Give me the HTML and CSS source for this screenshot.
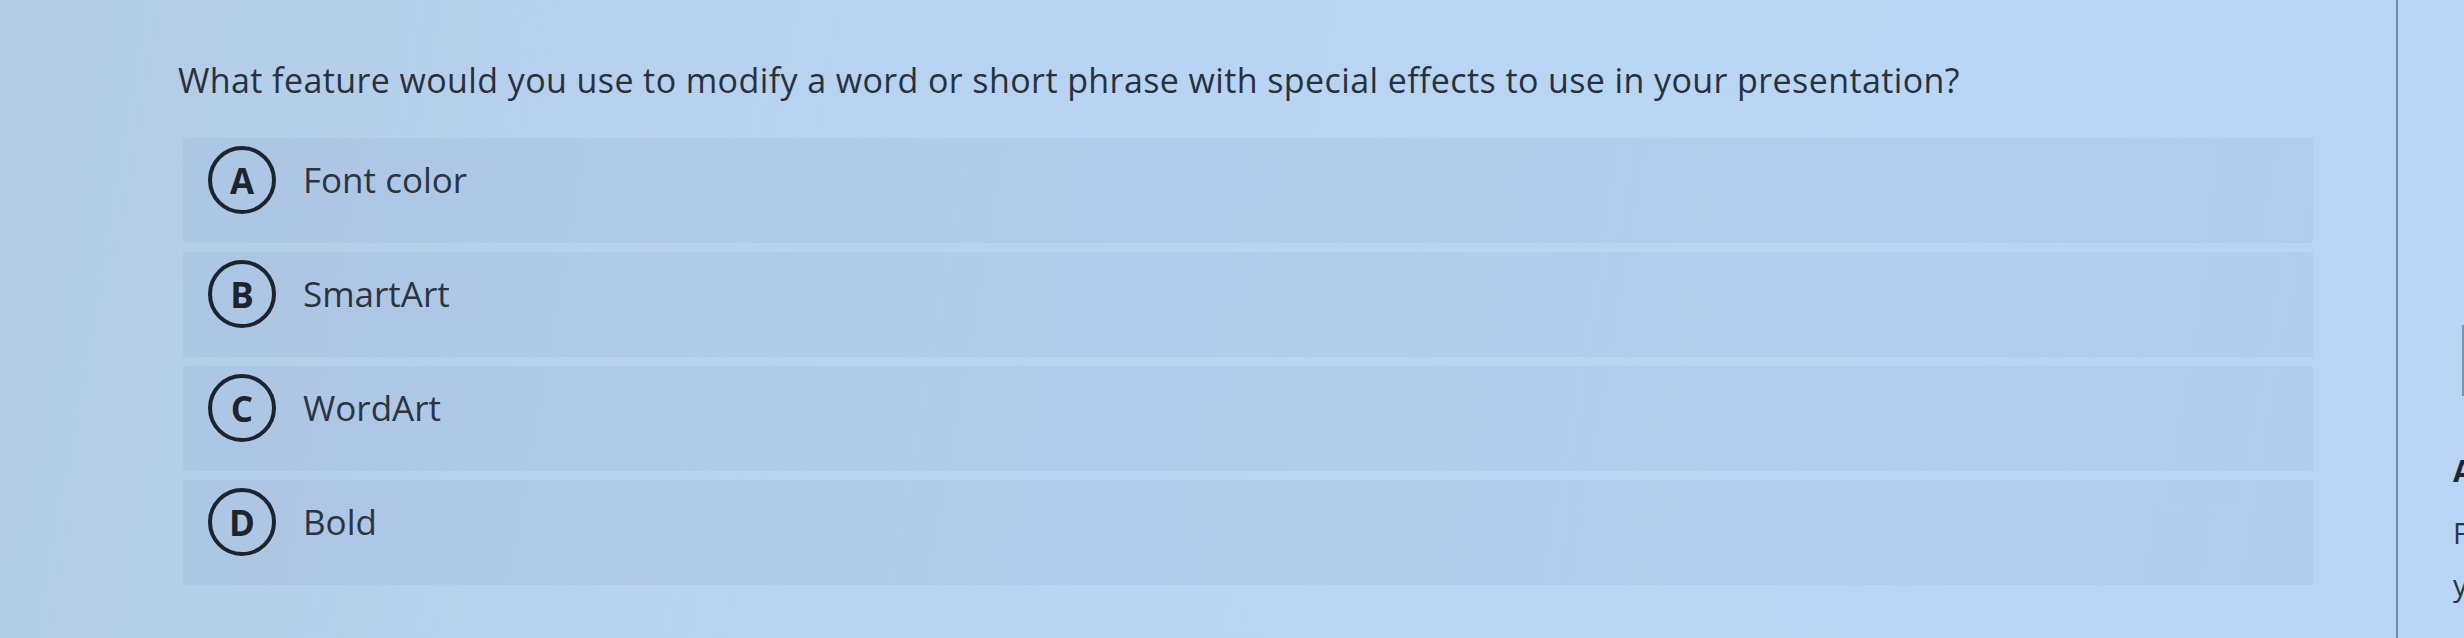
FILE: index.html
```html
<!DOCTYPE html>
<html lang="en">
<head>
<meta charset="utf-8">
<title>Question</title>
<link rel="stylesheet" href="styles.css">
</head>
<body>
<div class="page">
  <main class="main">
    <p class="question">What feature would you use to modify a word or short phrase with special effects to use in your presentation?</p>
    <div class="options">
      <div class="option"><span class="letter">A</span><span class="label">Font color</span></div>
      <div class="option"><span class="letter">B</span><span class="label">SmartArt</span></div>
      <div class="option"><span class="letter">C</span><span class="label">WordArt</span></div>
      <div class="option"><span class="letter">D</span><span class="label">Bold</span></div>
    </div>
  </main>
  <aside class="side">
    <div class="side-edge"></div>
    <div class="side-text">
      <div class="side-title">Answer</div>
      <div class="side-line">For</div>
      <div class="side-line">you</div>
    </div>
  </aside>
</div>
</body>
</html>
```

FILE: styles.css
```css
html, body {
  margin: 0;
  padding: 0;
}
body {
  width: 2464px;
  height: 638px;
  overflow: hidden;
  font-family: "Open Sans", "Noto Sans", sans-serif;
  color: #2b3441;
  background: linear-gradient(100deg, #b3cbe6 0%, #b8d3f1 35%, #bad6f5 70%, #b9d5f5 100%);
}
.page {
  display: flex;
  height: 638px;
}
.main {
  flex: 0 0 2396px;
  box-sizing: border-box;
  padding: 58px 83px 0 178px;
}
.question {
  margin: 0 0 36px 0;
  font-size: 34px;
  letter-spacing: 0.4px;
  line-height: 44px;
  color: #28313d;
  white-space: nowrap;
}
.options {
  display: flex;
  flex-direction: column;
  gap: 9px;
  margin-left: 5px;
}
.option {
  height: 105px;
  box-sizing: border-box;
  padding: 8px 25px 0;
  display: flex;
  align-items: flex-start;
  gap: 27px;
  background: rgba(150, 175, 208, 0.22);
}
.letter {
  flex: 0 0 auto;
  width: 68px;
  height: 68px;
  box-sizing: border-box;
  border: 4.5px solid #1d242d;
  border-radius: 50%;
  display: flex;
  align-items: center;
  justify-content: center;
  font-size: 35px;
  font-weight: 700;
  color: #1d242d;
  line-height: 1;
}
.label {
  font-size: 35px;
  line-height: 68px;
  color: #2b3441;
}
.side {
  flex: 1 1 auto;
  box-sizing: border-box;
  border-left: 2px solid #6f88a9;
  display: flex;
  position: relative;
}
.side-edge {
  position: absolute;
  left: 64px;
  top: 325px;
  height: 71px;
  border-left: 2px solid #7d93b0;
}
.side-text {
  padding: 451px 0 0 55px;
  white-space: nowrap;
}
.side-title {
  font-size: 30px;
  font-weight: 700;
  line-height: 40px;
  color: #1f2630;
  margin-bottom: 16px;
}
.side-line {
  font-size: 29px;
  line-height: 52px;
  color: #2b3441;
}
```
